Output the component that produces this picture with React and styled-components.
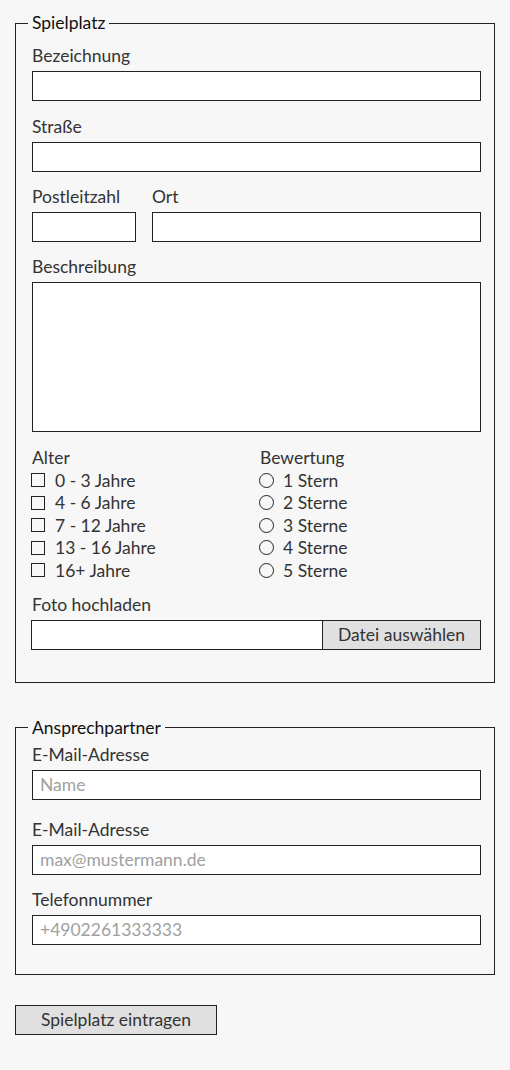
import React from "react";
import styled, { createGlobalStyle } from "styled-components";

const GlobalStyle = createGlobalStyle`
  html, body {
    margin: 0;
    padding: 0;
    background: #f7f7f7;
  }
  body {
    font-family: Lato, "Open Sans", "Liberation Sans", sans-serif;
    color: #333333;
  }
`;

const ages = ["0 - 3 Jahre", "4 - 6 Jahre", "7 - 12 Jahre", "13 - 16 Jahre", "16+ Jahre"];
const ratings = ["1 Stern", "2 Sterne", "3 Sterne", "4 Sterne", "5 Sterne"];

const App = () => {
  return (
    <>
      <GlobalStyle />
      <Page>
        <Fieldset $top={13} $bottom={32} $after={35}>
          <Legend>Spielplatz</Legend>
          <Field>
            <Label>Bezeichnung</Label>
            <Input type="text" />
          </Field>
          <Field $space={15}>
            <Label>Straße</Label>
            <Input type="text" />
          </Field>
          <Row>
            <Field $width="104px" $last>
              <Label>Postleitzahl</Label>
              <Input type="text" />
            </Field>
            <Field $grow $last>
              <Label>Ort</Label>
              <Input type="text" />
            </Field>
          </Row>
          <Field>
            <Label>Beschreibung</Label>
            <TextArea />
          </Field>
          <Columns>
            <div>
              <Label>Alter</Label>
              <OptionList>
                {ages.map(a => (
                  <Option key={a}>
                    <Box />
                    <OptionText>{a}</OptionText>
                  </Option>
                ))}
              </OptionList>
            </div>
            <div>
              <Label>Bewertung</Label>
              <OptionList>
                {ratings.map(r => (
                  <Option key={r} $radio>
                    <Circle />
                    <OptionText>{r}</OptionText>
                  </Option>
                ))}
              </OptionList>
            </div>
          </Columns>
          <Field $last>
            <Label>Foto hochladen</Label>
            <FileBox>
              <FileName />
              <FileButton type="button">Datei auswählen</FileButton>
            </FileBox>
          </Field>
        </Fieldset>

        <Fieldset $top={7} $bottom={29} $after={30}>
          <Legend>Ansprechpartner</Legend>
          <Field $space={20}>
            <Label>E-Mail-Adresse</Label>
            <Input type="text" placeholder="Name" />
          </Field>
          <Field $space={15}>
            <Label>E-Mail-Adresse</Label>
            <Input type="text" placeholder="max@mustermann.de" />
          </Field>
          <Field $last>
            <Label>Telefonnummer</Label>
            <Input type="text" placeholder="+4902261333333" />
          </Field>
        </Fieldset>

        <SubmitButton type="button">Spielplatz eintragen</SubmitButton>
      </Page>
    </>
  );
};

export default App;

const Page = styled.div`
  padding: 13px 15px 36px;
`;

const Fieldset = styled.fieldset`
  margin: 0 0 ${p => p.$after}px;
  padding: ${p => p.$top}px 13px ${p => p.$bottom}px 16px;
  border: 1px solid #222222;
  min-width: 0;
`;

const Legend = styled.legend`
  margin-left: -4px;
  padding: 0 4px;
  font-size: 17.5px;
  line-height: 20px;
  color: #111111;
`;

const Field = styled.div`
  display: flex;
  flex-direction: column;
  gap: 5px;
  margin-bottom: ${p => (p.$last ? 0 : p.$space ?? 16)}px;
  width: ${p => p.$width || "auto"};
  flex: ${p => (p.$grow ? 1 : "none")};
`;

const Label = styled.label`
  display: block;
  font-size: 17.5px;
  line-height: 20px;
  color: #333333;
`;

const Input = styled.input`
  box-sizing: border-box;
  width: 100%;
  height: 30px;
  margin: 0;
  padding: 0 7px;
  border: 1px solid #222222;
  background: #ffffff;
  font-family: inherit;
  font-size: 17.5px;
  color: #333333;
  &::placeholder {
    color: #a0a0a0;
  }
`;

const TextArea = styled.textarea`
  box-sizing: border-box;
  width: 100%;
  height: 150px;
  margin: 0;
  border: 1px solid #222222;
  background: #ffffff;
  resize: none;
`;

const Row = styled.div`
  display: flex;
  gap: 16px;
  margin-bottom: 15px;
`;

const Columns = styled.div`
  display: grid;
  grid-template-columns: 228px 1fr;
  margin-bottom: 13px;
`;

const OptionList = styled.div`
  display: flex;
  flex-direction: column;
  margin-top: 1px;
`;

const Option = styled.div`
  display: flex;
  align-items: center;
  height: 22.5px;
  gap: ${p => (p.$radio ? 9 : 10)}px;
  margin-left: -1px;
`;

const Box = styled.span`
  box-sizing: border-box;
  width: 14px;
  height: 14px;
  border: 1.5px solid #222222;
  background: #f7f7f7;
`;

const Circle = styled.span`
  box-sizing: border-box;
  width: 15px;
  height: 15px;
  border: 1.5px solid #222222;
  border-radius: 50%;
`;

const OptionText = styled.span`
  font-size: 17.5px;
  color: #333333;
`;

const FileBox = styled.div`
  display: flex;
  height: 30px;
  margin-left: -1px;
  border: 1px solid #222222;
  box-sizing: border-box;
  background: #ffffff;
`;

const FileName = styled.div`
  flex: 1;
`;

const FileButton = styled.button`
  width: 158px;
  margin: 0;
  border: none;
  border-left: 1px solid #222222;
  background: #e0e0e0;
  font-family: inherit;
  font-size: 17.5px;
  color: #333333;
  padding: 0;
`;

const SubmitButton = styled.button`
  display: block;
  width: 202px;
  height: 30px;
  margin: 0;
  padding: 0;
  border: 1px solid #222222;
  background: #e0e0e0;
  font-family: inherit;
  font-size: 17.5px;
  color: #333333;
`;
